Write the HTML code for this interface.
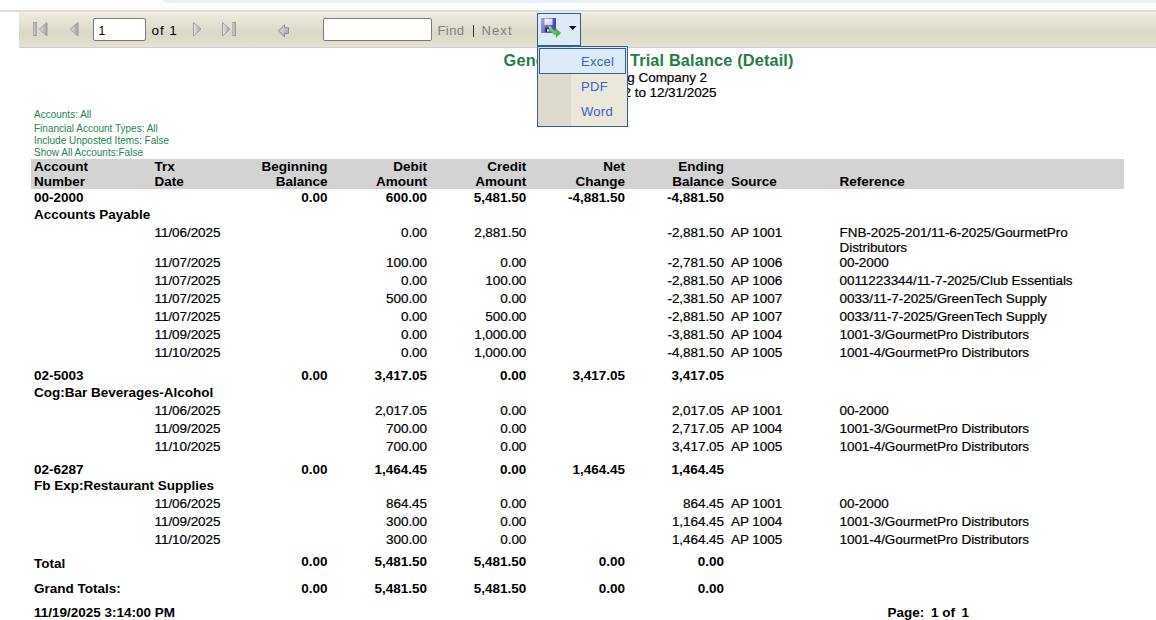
<!DOCTYPE html>
<html><head><meta charset="utf-8"><title>Trial Balance</title>
<style>
html,body{margin:0;padding:0;background:#fff;width:1156px;height:620px;overflow:hidden;position:relative;font-family:"Liberation Sans",sans-serif;color:#000}
.t{position:absolute;white-space:nowrap;font-size:13.5px;line-height:15px;letter-spacing:-0.06px;-webkit-text-stroke-width:0.2px}
</style></head><body>
<div class="t" style="top:109px;left:34px;font-size:10px;line-height:12px;color:#1e8550;letter-spacing:0;-webkit-text-stroke-width:0;">Accounts: All</div>
<div class="t" style="top:123px;left:34px;font-size:10px;line-height:12px;color:#1e8550;letter-spacing:0;-webkit-text-stroke-width:0;">Financial Account Types: All</div>
<div class="t" style="top:135px;left:34px;font-size:10px;line-height:12px;color:#1e8550;letter-spacing:0;-webkit-text-stroke-width:0;">Include Unposted Items: False</div>
<div class="t" style="top:147px;left:34px;font-size:10px;line-height:12px;color:#1e8550;letter-spacing:0;-webkit-text-stroke-width:0;">Show All Accounts:False</div>
<div class="t" style="top:51px;left:503.6px;font-weight:bold;font-size:16.3px;line-height:19px;color:#1f7f45;letter-spacing:0.16px;-webkit-text-stroke-width:0;">General Ledger Trial Balance (Detail)</div>
<div class="t" style="top:70px;left:407px;width:300px;text-align:right;">Testing Company 2</div>
<div class="t" style="top:85px;left:416.5px;width:300px;text-align:right;">1/1/2022 to 12/31/2025</div>
<div style="position:absolute;left:31px;top:159px;width:1093px;height:30px;background:#d3d3d3"></div>
<div class="t" style="top:159px;left:34px;font-weight:bold;letter-spacing:0px;-webkit-text-stroke-width:0;">Account</div>
<div class="t" style="top:174px;left:34px;font-weight:bold;letter-spacing:0px;-webkit-text-stroke-width:0;">Number</div>
<div class="t" style="top:159px;left:154.5px;font-weight:bold;letter-spacing:0px;-webkit-text-stroke-width:0;">Trx</div>
<div class="t" style="top:174px;left:154.5px;font-weight:bold;letter-spacing:0px;-webkit-text-stroke-width:0;">Date</div>
<div class="t" style="top:159px;left:27.6px;width:300px;text-align:right;font-weight:bold;letter-spacing:0px;-webkit-text-stroke-width:0;">Beginning</div>
<div class="t" style="top:174px;left:27.6px;width:300px;text-align:right;font-weight:bold;letter-spacing:0px;-webkit-text-stroke-width:0;">Balance</div>
<div class="t" style="top:159px;left:127px;width:300px;text-align:right;font-weight:bold;letter-spacing:0px;-webkit-text-stroke-width:0;">Debit</div>
<div class="t" style="top:174px;left:127px;width:300px;text-align:right;font-weight:bold;letter-spacing:0px;-webkit-text-stroke-width:0;">Amount</div>
<div class="t" style="top:159px;left:226.3px;width:300px;text-align:right;font-weight:bold;letter-spacing:0px;-webkit-text-stroke-width:0;">Credit</div>
<div class="t" style="top:174px;left:226.3px;width:300px;text-align:right;font-weight:bold;letter-spacing:0px;-webkit-text-stroke-width:0;">Amount</div>
<div class="t" style="top:159px;left:325px;width:300px;text-align:right;font-weight:bold;letter-spacing:0px;-webkit-text-stroke-width:0;">Net</div>
<div class="t" style="top:174px;left:325px;width:300px;text-align:right;font-weight:bold;letter-spacing:0px;-webkit-text-stroke-width:0;">Change</div>
<div class="t" style="top:159px;left:424px;width:300px;text-align:right;font-weight:bold;letter-spacing:0px;-webkit-text-stroke-width:0;">Ending</div>
<div class="t" style="top:174px;left:424px;width:300px;text-align:right;font-weight:bold;letter-spacing:0px;-webkit-text-stroke-width:0;">Balance</div>
<div class="t" style="top:174px;left:731px;font-weight:bold;letter-spacing:0px;-webkit-text-stroke-width:0;">Source</div>
<div class="t" style="top:174px;left:839.5px;font-weight:bold;letter-spacing:0px;-webkit-text-stroke-width:0;">Reference</div>
<div class="t" style="top:190px;left:34px;font-weight:bold;letter-spacing:0px;-webkit-text-stroke-width:0;">00-2000</div>
<div class="t" style="top:207px;left:34px;font-weight:bold;letter-spacing:0px;-webkit-text-stroke-width:0;">Accounts Payable</div>
<div class="t" style="top:190px;left:27.6px;width:300px;text-align:right;font-weight:bold;letter-spacing:0px;-webkit-text-stroke-width:0;">0.00</div>
<div class="t" style="top:190px;left:127px;width:300px;text-align:right;font-weight:bold;letter-spacing:0px;-webkit-text-stroke-width:0;">600.00</div>
<div class="t" style="top:190px;left:226.3px;width:300px;text-align:right;font-weight:bold;letter-spacing:0px;-webkit-text-stroke-width:0;">5,481.50</div>
<div class="t" style="top:190px;left:325px;width:300px;text-align:right;font-weight:bold;letter-spacing:0px;-webkit-text-stroke-width:0;">-4,881.50</div>
<div class="t" style="top:190px;left:424px;width:300px;text-align:right;font-weight:bold;letter-spacing:0px;-webkit-text-stroke-width:0;">-4,881.50</div>
<div class="t" style="top:225px;left:154.5px;">11/06/2025</div>
<div class="t" style="top:225px;left:127px;width:300px;text-align:right;">0.00</div>
<div class="t" style="top:225px;left:226.3px;width:300px;text-align:right;">2,881.50</div>
<div class="t" style="top:225px;left:424px;width:300px;text-align:right;">-2,881.50</div>
<div class="t" style="top:225px;left:731px;">AP 1001</div>
<div class="t" style="top:225px;left:839.5px;">FNB-2025-201/11-6-2025/GourmetPro</div>
<div class="t" style="top:240px;left:839.5px;">Distributors</div>
<div class="t" style="top:255px;left:154.5px;">11/07/2025</div>
<div class="t" style="top:255px;left:127px;width:300px;text-align:right;">100.00</div>
<div class="t" style="top:255px;left:226.3px;width:300px;text-align:right;">0.00</div>
<div class="t" style="top:255px;left:424px;width:300px;text-align:right;">-2,781.50</div>
<div class="t" style="top:255px;left:731px;">AP 1006</div>
<div class="t" style="top:255px;left:839.5px;">00-2000</div>
<div class="t" style="top:273px;left:154.5px;">11/07/2025</div>
<div class="t" style="top:273px;left:127px;width:300px;text-align:right;">0.00</div>
<div class="t" style="top:273px;left:226.3px;width:300px;text-align:right;">100.00</div>
<div class="t" style="top:273px;left:424px;width:300px;text-align:right;">-2,881.50</div>
<div class="t" style="top:273px;left:731px;">AP 1006</div>
<div class="t" style="top:273px;left:839.5px;">0011223344/11-7-2025/Club Essentials</div>
<div class="t" style="top:291px;left:154.5px;">11/07/2025</div>
<div class="t" style="top:291px;left:127px;width:300px;text-align:right;">500.00</div>
<div class="t" style="top:291px;left:226.3px;width:300px;text-align:right;">0.00</div>
<div class="t" style="top:291px;left:424px;width:300px;text-align:right;">-2,381.50</div>
<div class="t" style="top:291px;left:731px;">AP 1007</div>
<div class="t" style="top:291px;left:839.5px;">0033/11-7-2025/GreenTech Supply</div>
<div class="t" style="top:309px;left:154.5px;">11/07/2025</div>
<div class="t" style="top:309px;left:127px;width:300px;text-align:right;">0.00</div>
<div class="t" style="top:309px;left:226.3px;width:300px;text-align:right;">500.00</div>
<div class="t" style="top:309px;left:424px;width:300px;text-align:right;">-2,881.50</div>
<div class="t" style="top:309px;left:731px;">AP 1007</div>
<div class="t" style="top:309px;left:839.5px;">0033/11-7-2025/GreenTech Supply</div>
<div class="t" style="top:327px;left:154.5px;">11/09/2025</div>
<div class="t" style="top:327px;left:127px;width:300px;text-align:right;">0.00</div>
<div class="t" style="top:327px;left:226.3px;width:300px;text-align:right;">1,000.00</div>
<div class="t" style="top:327px;left:424px;width:300px;text-align:right;">-3,881.50</div>
<div class="t" style="top:327px;left:731px;">AP 1004</div>
<div class="t" style="top:327px;left:839.5px;">1001-3/GourmetPro Distributors</div>
<div class="t" style="top:345px;left:154.5px;">11/10/2025</div>
<div class="t" style="top:345px;left:127px;width:300px;text-align:right;">0.00</div>
<div class="t" style="top:345px;left:226.3px;width:300px;text-align:right;">1,000.00</div>
<div class="t" style="top:345px;left:424px;width:300px;text-align:right;">-4,881.50</div>
<div class="t" style="top:345px;left:731px;">AP 1005</div>
<div class="t" style="top:345px;left:839.5px;">1001-4/GourmetPro Distributors</div>
<div class="t" style="top:368px;left:34px;font-weight:bold;letter-spacing:0px;-webkit-text-stroke-width:0;">02-5003</div>
<div class="t" style="top:385px;left:34px;font-weight:bold;letter-spacing:0px;-webkit-text-stroke-width:0;">Cog:Bar Beverages-Alcohol</div>
<div class="t" style="top:368px;left:27.6px;width:300px;text-align:right;font-weight:bold;letter-spacing:0px;-webkit-text-stroke-width:0;">0.00</div>
<div class="t" style="top:368px;left:127px;width:300px;text-align:right;font-weight:bold;letter-spacing:0px;-webkit-text-stroke-width:0;">3,417.05</div>
<div class="t" style="top:368px;left:226.3px;width:300px;text-align:right;font-weight:bold;letter-spacing:0px;-webkit-text-stroke-width:0;">0.00</div>
<div class="t" style="top:368px;left:325px;width:300px;text-align:right;font-weight:bold;letter-spacing:0px;-webkit-text-stroke-width:0;">3,417.05</div>
<div class="t" style="top:368px;left:424px;width:300px;text-align:right;font-weight:bold;letter-spacing:0px;-webkit-text-stroke-width:0;">3,417.05</div>
<div class="t" style="top:403px;left:154.5px;">11/06/2025</div>
<div class="t" style="top:403px;left:127px;width:300px;text-align:right;">2,017.05</div>
<div class="t" style="top:403px;left:226.3px;width:300px;text-align:right;">0.00</div>
<div class="t" style="top:403px;left:424px;width:300px;text-align:right;">2,017.05</div>
<div class="t" style="top:403px;left:731px;">AP 1001</div>
<div class="t" style="top:403px;left:839.5px;">00-2000</div>
<div class="t" style="top:421px;left:154.5px;">11/09/2025</div>
<div class="t" style="top:421px;left:127px;width:300px;text-align:right;">700.00</div>
<div class="t" style="top:421px;left:226.3px;width:300px;text-align:right;">0.00</div>
<div class="t" style="top:421px;left:424px;width:300px;text-align:right;">2,717.05</div>
<div class="t" style="top:421px;left:731px;">AP 1004</div>
<div class="t" style="top:421px;left:839.5px;">1001-3/GourmetPro Distributors</div>
<div class="t" style="top:439px;left:154.5px;">11/10/2025</div>
<div class="t" style="top:439px;left:127px;width:300px;text-align:right;">700.00</div>
<div class="t" style="top:439px;left:226.3px;width:300px;text-align:right;">0.00</div>
<div class="t" style="top:439px;left:424px;width:300px;text-align:right;">3,417.05</div>
<div class="t" style="top:439px;left:731px;">AP 1005</div>
<div class="t" style="top:439px;left:839.5px;">1001-4/GourmetPro Distributors</div>
<div class="t" style="top:462px;left:34px;font-weight:bold;letter-spacing:0px;-webkit-text-stroke-width:0;">02-6287</div>
<div class="t" style="top:478px;left:34px;font-weight:bold;letter-spacing:0px;-webkit-text-stroke-width:0;">Fb Exp:Restaurant Supplies</div>
<div class="t" style="top:462px;left:27.6px;width:300px;text-align:right;font-weight:bold;letter-spacing:0px;-webkit-text-stroke-width:0;">0.00</div>
<div class="t" style="top:462px;left:127px;width:300px;text-align:right;font-weight:bold;letter-spacing:0px;-webkit-text-stroke-width:0;">1,464.45</div>
<div class="t" style="top:462px;left:226.3px;width:300px;text-align:right;font-weight:bold;letter-spacing:0px;-webkit-text-stroke-width:0;">0.00</div>
<div class="t" style="top:462px;left:325px;width:300px;text-align:right;font-weight:bold;letter-spacing:0px;-webkit-text-stroke-width:0;">1,464.45</div>
<div class="t" style="top:462px;left:424px;width:300px;text-align:right;font-weight:bold;letter-spacing:0px;-webkit-text-stroke-width:0;">1,464.45</div>
<div class="t" style="top:496px;left:154.5px;">11/06/2025</div>
<div class="t" style="top:496px;left:127px;width:300px;text-align:right;">864.45</div>
<div class="t" style="top:496px;left:226.3px;width:300px;text-align:right;">0.00</div>
<div class="t" style="top:496px;left:424px;width:300px;text-align:right;">864.45</div>
<div class="t" style="top:496px;left:731px;">AP 1001</div>
<div class="t" style="top:496px;left:839.5px;">00-2000</div>
<div class="t" style="top:514px;left:154.5px;">11/09/2025</div>
<div class="t" style="top:514px;left:127px;width:300px;text-align:right;">300.00</div>
<div class="t" style="top:514px;left:226.3px;width:300px;text-align:right;">0.00</div>
<div class="t" style="top:514px;left:424px;width:300px;text-align:right;">1,164.45</div>
<div class="t" style="top:514px;left:731px;">AP 1004</div>
<div class="t" style="top:514px;left:839.5px;">1001-3/GourmetPro Distributors</div>
<div class="t" style="top:532px;left:154.5px;">11/10/2025</div>
<div class="t" style="top:532px;left:127px;width:300px;text-align:right;">300.00</div>
<div class="t" style="top:532px;left:226.3px;width:300px;text-align:right;">0.00</div>
<div class="t" style="top:532px;left:424px;width:300px;text-align:right;">1,464.45</div>
<div class="t" style="top:532px;left:731px;">AP 1005</div>
<div class="t" style="top:532px;left:839.5px;">1001-4/GourmetPro Distributors</div>
<div class="t" style="top:556px;left:34px;font-weight:bold;letter-spacing:0px;-webkit-text-stroke-width:0;">Total</div>
<div class="t" style="top:554px;left:27.6px;width:300px;text-align:right;font-weight:bold;letter-spacing:0px;-webkit-text-stroke-width:0;">0.00</div>
<div class="t" style="top:554px;left:127px;width:300px;text-align:right;font-weight:bold;letter-spacing:0px;-webkit-text-stroke-width:0;">5,481.50</div>
<div class="t" style="top:554px;left:226.3px;width:300px;text-align:right;font-weight:bold;letter-spacing:0px;-webkit-text-stroke-width:0;">5,481.50</div>
<div class="t" style="top:554px;left:325px;width:300px;text-align:right;font-weight:bold;letter-spacing:0px;-webkit-text-stroke-width:0;">0.00</div>
<div class="t" style="top:554px;left:424px;width:300px;text-align:right;font-weight:bold;letter-spacing:0px;-webkit-text-stroke-width:0;">0.00</div>
<div class="t" style="top:581px;left:34px;font-weight:bold;letter-spacing:0px;-webkit-text-stroke-width:0;">Grand Totals:</div>
<div class="t" style="top:581px;left:27.6px;width:300px;text-align:right;font-weight:bold;letter-spacing:0px;-webkit-text-stroke-width:0;">0.00</div>
<div class="t" style="top:581px;left:127px;width:300px;text-align:right;font-weight:bold;letter-spacing:0px;-webkit-text-stroke-width:0;">5,481.50</div>
<div class="t" style="top:581px;left:226.3px;width:300px;text-align:right;font-weight:bold;letter-spacing:0px;-webkit-text-stroke-width:0;">5,481.50</div>
<div class="t" style="top:581px;left:325px;width:300px;text-align:right;font-weight:bold;letter-spacing:0px;-webkit-text-stroke-width:0;">0.00</div>
<div class="t" style="top:581px;left:424px;width:300px;text-align:right;font-weight:bold;letter-spacing:0px;-webkit-text-stroke-width:0;">0.00</div>
<div class="t" style="top:605px;left:34px;font-weight:bold;letter-spacing:0px;-webkit-text-stroke-width:0;">11/19/2025 3:14:00 PM</div>
<div class="t" style="top:605px;left:887.5px;font-weight:bold;letter-spacing:0px;-webkit-text-stroke-width:0;">Page:</div>
<div class="t" style="top:605px;left:931px;font-weight:bold;letter-spacing:0px;-webkit-text-stroke-width:0;">1 of</div>
<div class="t" style="top:605px;left:961.5px;font-weight:bold;letter-spacing:0px;-webkit-text-stroke-width:0;">1</div>
<div style="position:absolute;left:158px;top:-10px;width:1000px;height:13px;background:#eaf0f8;border-radius:0 0 0 10px"></div>
<div style="position:absolute;left:0;top:10px;width:1156px;height:2px;background:#dcdedb"></div>
<div style="position:absolute;left:19px;top:12px;width:1137px;height:35px;background:linear-gradient(#f6f3e4 0px,#ece9da 3px,#e5e1d2 12px,#dcd8c8 21px,#dedac9 26px,#e6e2d3 35px);border-bottom:1px solid #cfcfcf"></div>
<svg style="position:absolute;left:0;top:0" width="1156" height="50" viewBox="0 0 1156 50">
<defs>
<linearGradient id="gi" x1="0" y1="0" x2="1" y2="0"><stop offset="0" stop-color="#e8e8e8"/><stop offset="1" stop-color="#a0a0a0"/></linearGradient>
<linearGradient id="gv" x1="0" y1="0" x2="0" y2="1"><stop offset="0" stop-color="#d8d8d8"/><stop offset="1" stop-color="#8c8c8c"/></linearGradient>
<linearGradient id="gb" x1="0" y1="0" x2="1" y2="1"><stop offset="0" stop-color="#dadada"/><stop offset="0.5" stop-color="#c4c4c4"/><stop offset="1" stop-color="#9a9a9a"/></linearGradient>
</defs>
<!-- first page -->
<rect x="33.7" y="22.5" width="2.6" height="13" fill="url(#gi)" stroke="#9d9d9d" stroke-width="1"/>
<path d="M39.5 29.2 L47 22.5 L47 36 Z" fill="url(#gi)" stroke="#9d9d9d" stroke-width="1" stroke-linejoin="round"/>
<!-- prev -->
<path d="M70 29.2 L78 22.5 L78 36 Z" fill="url(#gi)" stroke="#9d9d9d" stroke-width="1" stroke-linejoin="round"/>
<!-- next -->
<path d="M201 29.2 L193.5 22.5 L193.5 36 Z" fill="url(#gi)" stroke="#9d9d9d" stroke-width="1" stroke-linejoin="round"/>
<!-- last -->
<path d="M230 29.2 L222.5 22.5 L222.5 36 Z" fill="url(#gi)" stroke="#9d9d9d" stroke-width="1" stroke-linejoin="round"/>
<rect x="232.9" y="22.5" width="2.6" height="13" fill="url(#gi)" stroke="#9d9d9d" stroke-width="1"/>
<!-- back -->
<path d="M278.5 30.8 L284.5 24.8 L284.5 27.8 L288.5 27.8 L288.5 33.5 L284.5 33.5 L284.5 37 Z" fill="url(#gb)" stroke="#8c8c8c" stroke-width="1" stroke-linejoin="round"/>
</svg>
<div style="position:absolute;left:93px;top:18px;width:51px;height:21px;border:1px solid #7a7a7a;border-radius:2px;background:#fff"></div>
<div class="t" style="left:98.5px;top:24px;font-size:12px;line-height:15px;letter-spacing:0;-webkit-text-stroke-width:0">1</div>
<div class="t" style="left:151.5px;top:23px;font-size:13.5px;line-height:15px;letter-spacing:0.95px;-webkit-text-stroke-width:0">of 1</div>
<div style="position:absolute;left:323px;top:18px;width:107px;height:21px;border:1px solid #7a7a7a;border-radius:2px;background:#fff"></div>
<div class="t" style="left:437.5px;top:23px;font-size:13px;line-height:15px;letter-spacing:0.4px;color:#808080;-webkit-text-stroke-width:0">Find</div>
<div style="position:absolute;left:473px;top:25px;width:1px;height:12px;background:#333"></div>
<div class="t" style="left:481.5px;top:23px;font-size:13px;line-height:15px;letter-spacing:1.1px;color:#808080;-webkit-text-stroke-width:0">Next</div>
<!-- export button -->
<div style="position:absolute;left:537px;top:13px;width:42px;height:31px;border:1px solid #2f5f96;background:#dcebf5"></div>
<svg style="position:absolute;left:537px;top:13px" width="44" height="33" viewBox="0 0 44 33">
<defs>
<linearGradient id="fl" x1="0" y1="0" x2="1" y2="0.3"><stop offset="0" stop-color="#a4a4fa"/><stop offset="0.5" stop-color="#6a6ad8"/><stop offset="1" stop-color="#4848b4"/></linearGradient>
<linearGradient id="lb" x1="0" y1="0" x2="1" y2="1"><stop offset="0" stop-color="#ffffff"/><stop offset="1" stop-color="#c8c8e8"/></linearGradient>
<linearGradient id="ar" x1="0" y1="0" x2="1" y2="1"><stop offset="0" stop-color="#8ede8e"/><stop offset="1" stop-color="#3aa03a"/></linearGradient>
</defs>
<rect x="4" y="5" width="15" height="15" fill="url(#fl)"/>
<rect x="7.5" y="5.7" width="8" height="6.3" fill="url(#lb)"/>
<rect x="8.3" y="14.6" width="5" height="4.4" fill="#2a2a40"/>
<rect x="10" y="16.2" width="2.5" height="2.5" fill="#d8d8e0"/>
<path d="M11.3 13.6 L13.6 12.6 C14.6 15.4 16.4 17.4 18.6 17.7 L18.6 15 L23.8 20 L19 24.6 L19 21.8 C15.5 21.4 12.4 18 11.3 13.6 Z" fill="url(#ar)" stroke="#4aa84a" stroke-width="0.4"/>
<path d="M32 13 L39.5 13 L35.75 17 Z" fill="#000"/>
</svg>
<!-- menu -->
<div style="position:absolute;left:537px;top:46px;width:89px;height:79px;border:1px solid #2f5f96;background:linear-gradient(90deg,#dfdbcc 0,#dfdbcc 33px,#ebe7d9 33px)"></div>
<div style="position:absolute;left:539px;top:48px;width:85px;height:24px;border:1px solid #2f5f96;background:#dcebf5"></div>
<div class="t" style="left:581px;top:54px;font-size:13px;line-height:15px;letter-spacing:0.3px;color:#3a62c8;-webkit-text-stroke-width:0">Excel</div>
<div class="t" style="left:581px;top:79px;font-size:13px;line-height:15px;letter-spacing:0.3px;color:#3a62c8;-webkit-text-stroke-width:0">PDF</div>
<div class="t" style="left:581px;top:104px;font-size:13px;line-height:15px;letter-spacing:0.3px;color:#3a62c8;-webkit-text-stroke-width:0">Word</div>

</body></html>
